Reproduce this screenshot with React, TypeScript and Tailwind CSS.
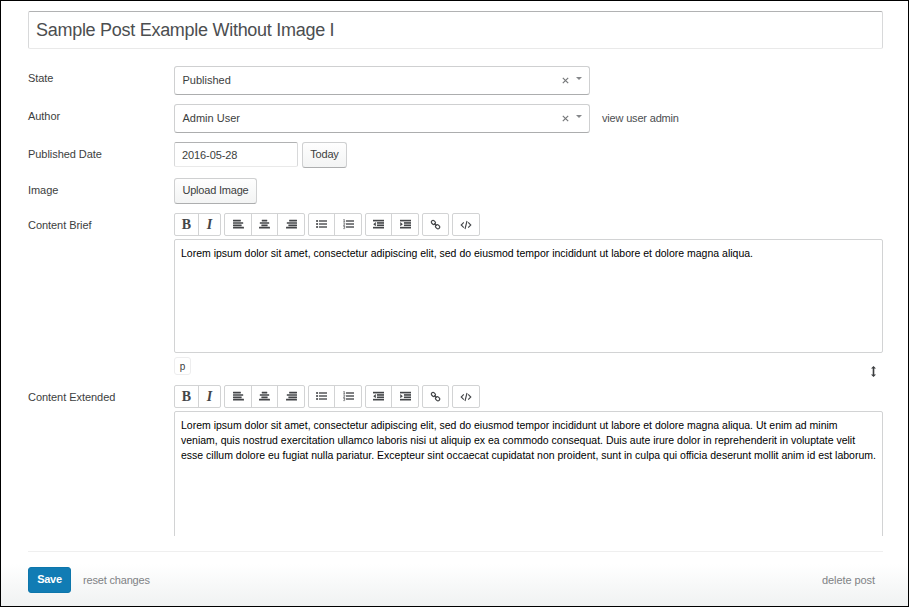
import type { ReactNode } from "react";

function Glyph({ children }: { children: ReactNode }) {
  return (
    <svg width="11" height="11" viewBox="0 0 1792 1792" fill="currentColor">
      {children}
    </svg>
  );
}

type Bar = [number, number];

function Bars({ rows }: { rows: Bar[] }) {
  return (
    <Glyph>
      {rows.map(([x, w], i) => (
        <rect key={i} x={x} y={128 + i * 384} width={w} height="265" rx="50" />
      ))}
    </Glyph>
  );
}

const left: Bar[] = [[0, 1280], [0, 1664], [0, 1408], [0, 1792]];
const center: Bar[] = [[448, 896], [128, 1536], [384, 1024], [0, 1792]];
const right: Bar[] = [[512, 1280], [128, 1664], [384, 1408], [0, 1792]];

function Bullets() {
  return (
    <Glyph>
      {[326, 815, 1304].map((y) => (
        <g key={y}>
          <circle cx="170" cy={y} r="175" />
          <rect x="480" y={y - 110} width="1312" height="220" />
        </g>
      ))}
    </Glyph>
  );
}

function Numbers() {
  return (
    <Glyph>
      {[326, 815, 1304].map((y) => (
        <rect key={y} x="480" y={y - 110} width="1312" height="220" />
      ))}
      <path
        d="M70 130 200 40V470M60 470H340M60 680Q300 600 290 760Q280 880 70 1020H340M60 1200H310L180 1350Q340 1370 300 1510Q240 1640 50 1560"
        fill="none"
        stroke="currentColor"
        strokeWidth="110"
      />
    </Glyph>
  );
}

function Dent({ inward }: { inward?: boolean }) {
  return (
    <Glyph>
      <rect y="128" width="1792" height="265" />
      <rect x="640" y="512" width="1152" height="265" />
      <rect x="640" y="896" width="1152" height="265" />
      <rect y="1280" width="1792" height="265" />
      <path d={inward ? "M40 480V1190L460 835Z" : "M460 480V1190L40 835Z"} />
    </Glyph>
  );
}

function Chain() {
  return (
    <svg width="11" height="11" viewBox="0 0 12 12" fill="none" stroke="currentColor" strokeWidth="1.3" className="-mt-px">
      <rect x="1.3" y="1.9" width="4.8" height="3.7" rx="1.8" transform="rotate(45 3.7 3.75)" />
      <rect x="5.9" y="6.6" width="4.8" height="3.7" rx="1.8" transform="rotate(45 8.3 8.45)" />
      <path d="m4.7 4.7 2.6 2.6" />
    </svg>
  );
}

function Code() {
  return (
    <svg width="12" height="12" viewBox="0 0 12 12" fill="none" stroke="currentColor" strokeWidth="1.1" className="mt-px">
      <path d="M3.8 3.4 1.2 6l2.6 2.6M8.2 3.4 10.8 6 8.2 8.6M7 2 5 10" />
    </svg>
  );
}

function Group({ children }: { children: ReactNode }) {
  return (
    <div className="flex h-[23px] divide-x divide-[#d2d3d4] rounded-[2px] border border-[#d2d3d4] bg-white">
      {children}
    </div>
  );
}

function Tool({ label, wide, children }: { label: string; wide: string; children: ReactNode }) {
  return (
    <button aria-label={label} className={`flex items-center justify-center ${wide}`}>
      {children}
    </button>
  );
}

function Toolbar() {
  return (
    <div className="flex gap-[3px] text-[#434548]">
      <Group>
        <Tool label="Bold" wide="w-6">
          <span className="font-['Liberation_Serif',serif] text-[14px] leading-none font-bold">B</span>
        </Tool>
        <Tool label="Italic" wide="w-[21px]">
          <span className="font-['Liberation_Serif',serif] text-[14px] leading-none font-bold italic">I</span>
        </Tool>
      </Group>
      <Group>
        <Tool label="Align left" wide="w-[27px]"><Bars rows={left} /></Tool>
        <Tool label="Align center" wide="w-[26px]"><Bars rows={center} /></Tool>
        <Tool label="Align right" wide="w-[26px]"><Bars rows={right} /></Tool>
      </Group>
      <Group>
        <Tool label="Bullet list" wide="w-[26px]"><Bullets /></Tool>
        <Tool label="Numbered list" wide="w-[26px]"><Numbers /></Tool>
      </Group>
      <Group>
        <Tool label="Outdent" wide="w-[26px]"><Dent /></Tool>
        <Tool label="Indent" wide="w-[26px]"><Dent inward /></Tool>
      </Group>
      <Group>
        <Tool label="Link" wide="w-[25px]"><Chain /></Tool>
      </Group>
      <Group>
        <Tool label="Code" wide="w-[26px]"><Code /></Tool>
      </Group>
    </div>
  );
}

function Select({ value }: { value: string }) {
  return (
    <div className="flex h-[29px] w-[416px] items-center rounded-[3px] border border-[#cfd0d1] border-b-[#acadae] bg-white pr-[7px] pl-[7.5px]">
      <span className="flex-1">{value}</span>
      <svg width="7" height="7" viewBox="0 0 7 7" className="mr-[7px]" stroke="#77797b" strokeWidth="1.2">
        <path d="m.8.8 5.4 5.4M6.2.8.8 6.2" />
      </svg>
      <svg width="6" height="3" viewBox="0 0 6 3" className="mb-1" fill="#85878a">
        <path d="M0 0h6L3 3Z" />
      </svg>
    </div>
  );
}

function Row({ label, height, children }: { label: string; height: string; children: ReactNode }) {
  return (
    <div className={`flex shrink-0 ${height}`}>
      <div className="w-[146px] shrink-0 pt-[6px] leading-[13px] tracking-[-0.05px]">{label}</div>
      <div className="min-w-0 flex-1">{children}</div>
    </div>
  );
}

const button =
  "flex h-[26px] items-center justify-center rounded-[3px] border border-[#cfd0d1] border-b-[#adaeaf] bg-linear-to-b from-[#fefefe] to-[#f3f4f4] pb-[2px] tracking-[-0.2px]";

const editor =
  "mt-[3px] rounded-[2px] border border-[#d2d3d4] px-[6px] pt-[6px] text-[10.5px] leading-[15px] whitespace-nowrap text-black";

export default function App() {
  return (
    <div className="flex h-[607px] w-[909px] flex-col overflow-hidden border border-black bg-white font-['Liberation_Sans',Arial,sans-serif] text-[11px] text-[#3c3e40]">
      <main className="flex h-[535px] shrink-0 flex-col overflow-hidden pt-[10px] pr-[25px] pl-[27px]">
        <div className="mb-[17px] flex h-[38px] shrink-0 items-center rounded-[2px] border border-[#d8d9da] border-t-[#b1b2b3] border-b-[#e9e9e9] pl-[7px] text-[18px] tracking-[-0.28px] text-[#4c4e50]">
          Sample Post Example Without Image I
        </div>
        <Row label="State" height="h-[38px]">
          <Select value="Published" />
        </Row>
        <Row label="Author" height="h-[38px]">
          <div className="flex items-center">
            <Select value="Admin User" />
            <a className="ml-3 pb-px tracking-[-0.18px] text-[#4c4e51]">view user admin</a>
          </div>
        </Row>
        <Row label="Published Date" height="h-9">
          <div className="flex gap-1">
            <div className="flex h-[25px] w-[124px] items-center rounded-[2px] border border-[#d8d9da] border-t-[#b1b2b3] border-b-[#e9e9e9] pt-px pl-[7px] tracking-[-0.1px]">
              2016-05-28
            </div>
            <button className={`${button} w-[45px]`}>Today</button>
          </div>
        </Row>
        <Row label="Image" height="h-[35px]">
          <button className={`${button} w-[83px]`}>Upload Image</button>
        </Row>
        <Row label="Content Brief" height="h-[172px]">
          <Toolbar />
          <div className={`${editor} h-[114px]`}>
            Lorem ipsum dolor sit amet, consectetur adipiscing elit, sed do eiusmod tempor incididunt ut labore et dolore magna aliqua.
          </div>
          <div className="flex items-start justify-between pt-1 pr-[7px]">
            <span className="flex h-[18px] w-[17px] items-center justify-center rounded-[3px] border border-[#ededee] text-[10px]">p</span>
            <svg width="5" height="11" viewBox="0 0 5 11" className="mt-[9px]" fill="#3c3e40">
              <path d="M2.5 0 5 2.5H3.3v6H5L2.5 11 0 8.5h1.7v-6H0Z" />
            </svg>
          </div>
        </Row>
        <Row label="Content Extended" height="h-[160px]">
          <Toolbar />
          <div className={`${editor} h-[140px]`}>
            <p>Lorem ipsum dolor sit amet, consectetur adipiscing elit, sed do eiusmod tempor incididunt ut labore et dolore magna aliqua. Ut enim ad minim</p>
            <p>veniam, quis nostrud exercitation ullamco laboris nisi ut aliquip ex ea commodo consequat. Duis aute irure dolor in reprehenderit in voluptate velit</p>
            <p>esse cillum dolore eu fugiat nulla pariatur. Excepteur sint occaecat cupidatat non proident, sunt in culpa qui officia deserunt mollit anim id est laborum.</p>
          </div>
        </Row>
      </main>
      <footer className="flex flex-1 flex-col bg-linear-to-b from-white from-40% to-[#f0f2f2] pt-[15px] pr-[25px] pl-[27px]">
        <div className="flex items-center border-t border-[#efefef] pt-[15px] tracking-[-0.18px] text-[#808285]">
          <button className="h-[26px] w-[43px] rounded-[3px] border border-[#0d76ab] bg-[#117cb4] pb-px font-bold tracking-[-0.3px] text-white">
            Save
          </button>
          <a className="ml-[12px]">reset changes</a>
          <a className="mr-2 ml-auto tracking-[-0.08px]">delete post</a>
        </div>
      </footer>
    </div>
  );
}
